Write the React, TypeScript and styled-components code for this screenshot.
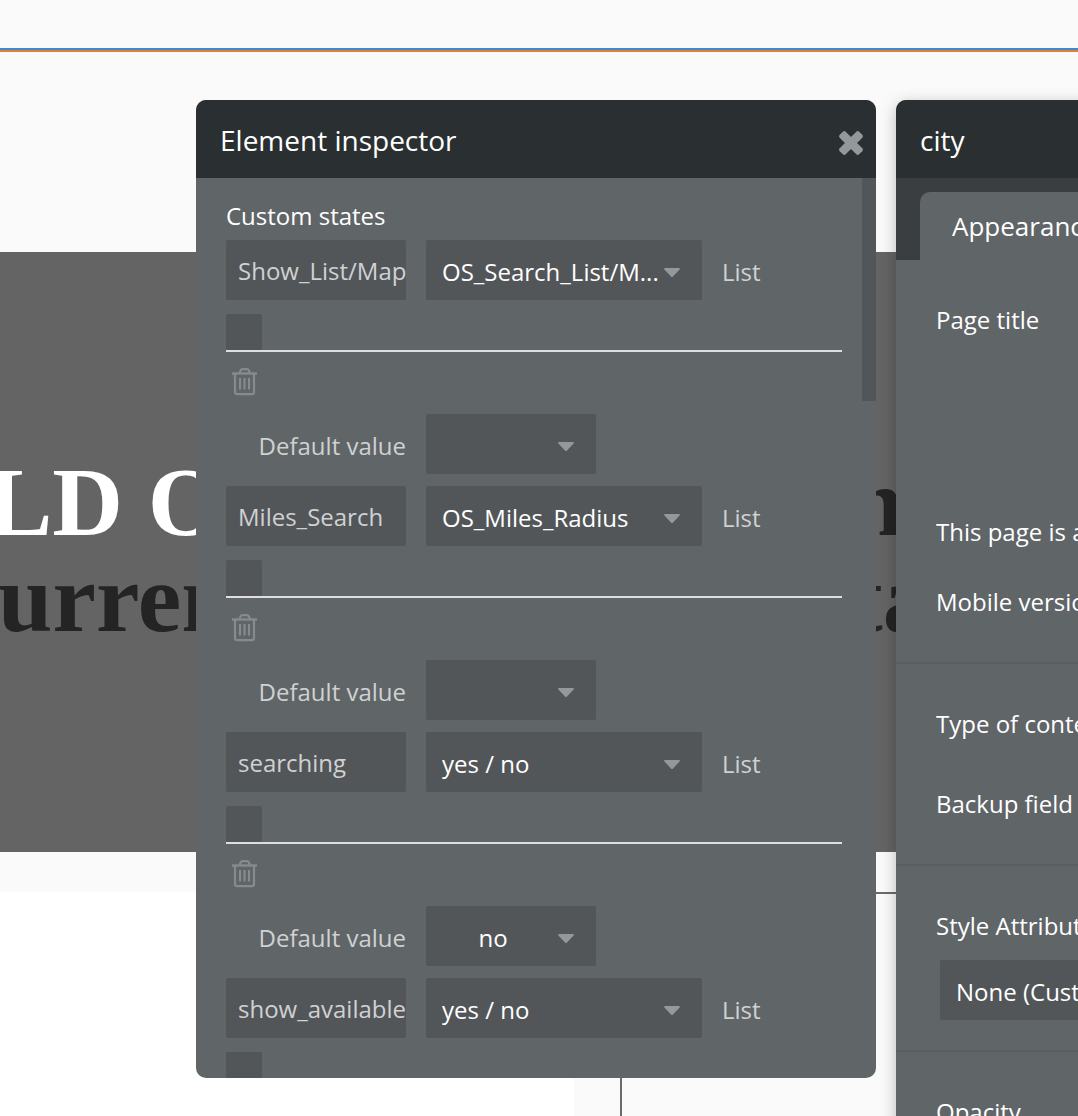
import React, { useId } from "react";
import styled, { createGlobalStyle } from "styled-components";

const color = {
  page: "#fafafa",
  band: "#646464",
  header: "#2a2f31",
  strip: "#3b3e41",
  panel: "#606568",
  field: "#535659",
  line: "#595d60",
  rule: "#dededc",
  text: "#ffffff",
  muted: "#cfd1d2",
  icon: "#93989b",
  iconDim: "#868b8e",
};

const GlobalStyle = createGlobalStyle`
  *, *::before, *::after { box-sizing: border-box; }
  body {
    margin: 0;
    background: ${color.page};
    font-family: "Open Sans", "Noto Sans", sans-serif;
  }
  input, select, button { font: inherit; }
`;

const Page = styled.main`
  position: relative;
  display: flex;
  flex-direction: column;
  height: 100vh;
  overflow: hidden;
`;

const TopBar = styled.div`
  flex: none;
  height: 52px;
  border-bottom: 2px solid #e0812f;
  &::after {
    content: "";
    display: block;
    height: 50px;
    border-bottom: 2px solid #3f87d9;
  }
`;

const Hero = styled.section`
  flex: none;
  display: flex;
  flex-direction: column;
  justify-content: center;
  height: 600px;
  margin: 200px 0 40px;
  padding-bottom: 4px;
  background: ${color.band};
`;

const HeroLine = styled.p<{ $start: number }>`
  display: flex;
  margin: 0 0 0 ${(p) => p.$start}px;
  color: #242424;
  font: bold 98px/96px "Liberation Serif", "Times New Roman", serif;
  white-space: nowrap;
`;

const HeroLead = styled.span<{ $light?: boolean; $width: number }>`
  flex: none;
  width: ${(p) => p.$width}px;
  color: ${(p) => (p.$light ? "#ffffff" : "inherit")};
`;

const Cards = styled.section`
  flex: 1;
  display: flex;
  gap: 46px;
`;

const WhiteCard = styled.div`
  width: 574px;
  background: #ffffff;
`;

const OutlineCard = styled.div`
  flex: 1;
  border: 2px solid #6b6b6b;
  border-width: 2px 0 0 2px;
`;

const Window = styled.section<{ $left: number; $height: number; $shadow?: boolean }>`
  position: absolute;
  top: 100px;
  left: ${(p) => p.$left}px;
  display: flex;
  flex-direction: column;
  width: 680px;
  height: ${(p) => p.$height}px;
  overflow: hidden;
  border-radius: 10px;
  background: ${color.panel};
  color: ${color.text};
  font-size: 24px;
  line-height: 32px;
  box-shadow: ${(p) => (p.$shadow ? "0 4px 16px rgba(0, 0, 0, 0.26)" : "none")};
`;

const WindowHeader = styled.header`
  flex: none;
  display: flex;
  align-items: center;
  justify-content: space-between;
  height: 78px;
  padding: 2px 12px 0 24px;
  background: ${color.header};
`;

const WindowTitle = styled.h2`
  margin: 0;
  font-size: 28px;
  font-weight: 400;
  line-height: 36px;
`;

const IconButton = styled.button`
  display: flex;
  padding: 0;
  border: 0;
  background: none;
  color: ${color.icon};
  cursor: pointer;
`;

const CloseButton = styled(IconButton)`
  padding-top: 6px;
`;

const InspectorBody = styled.div`
  flex: 1;
  display: flex;
  align-items: flex-start;
  min-height: 0;
  overflow: hidden;
`;

const StateList = styled.div`
  flex: 1;
  padding: 22px 20px 0 30px;
`;

const ScrollThumb = styled.div`
  flex: none;
  width: 14px;
  height: 223px;
  background: ${color.field};
`;

const SectionTitle = styled.h3`
  margin: 0 0 8px;
  font-size: 24px;
  font-weight: 400;
  line-height: 32px;
`;

const StateItem = styled.div`
  margin-bottom: 12px;
`;

const FieldRow = styled.div`
  display: flex;
  align-items: center;
  gap: 20px;
`;

const NameInput = styled.input`
  width: 180px;
  height: 60px;
  padding: 0 0 0 12px;
  border: 0;
  border-radius: 2px;
  background: ${color.field};
  color: ${color.muted};
`;

const SelectBox = styled.span<{ $width: number }>`
  position: relative;
  flex: none;
  width: ${(p) => p.$width}px;
`;

const Select = styled.select<{ $centered?: boolean }>`
  appearance: none;
  display: block;
  width: 100%;
  height: 60px;
  padding: ${(p) => (p.$centered ? "4px 52px 0 16px" : "4px 40px 0 16px")};
  border: 0;
  border-radius: 2px;
  background: ${color.field};
  color: ${color.text};
  text-align-last: ${(p) => (p.$centered ? "center" : "left")};
`;

const Caret = styled.svg`
  position: absolute;
  top: 28px;
  right: 22px;
  pointer-events: none;
`;

const MutedLabel = styled.label<{ $right?: boolean }>`
  width: ${(p) => (p.$right ? "180px" : "auto")};
  padding-top: 4px;
  color: ${color.muted};
  text-align: ${(p) => (p.$right ? "right" : "left")};
`;

const CheckRow = styled.div`
  display: flex;
  margin-top: 14px;
  border-bottom: 2px solid ${color.rule};
`;

const Check = styled.input`
  appearance: none;
  width: 36px;
  height: 36px;
  margin: 0;
  border-radius: 2px;
  background: ${color.field};
`;

const DeleteRow = styled.div`
  display: flex;
  align-items: center;
  height: 62px;
  padding: 0 0 2px 6px;
`;

const DeleteButton = styled(IconButton)`
  color: ${color.iconDim};
`;

const TabStrip = styled.nav`
  flex: none;
  display: flex;
  padding: 14px 24px 0;
  background: ${color.strip};
`;

const Tab = styled.button`
  height: 68px;
  padding: 0 32px;
  border: 0;
  border-radius: 10px 10px 0 0;
  background: ${color.panel};
  color: ${color.text};
  font-size: 26px;
  line-height: 32px;
`;

const Group = styled.div<{ $bottom?: number; $gap: number }>`
  flex: none;
  display: flex;
  flex-direction: column;
  gap: ${(p) => p.$gap}px;
  padding: 44px 40px ${(p) => p.$bottom ?? 44}px;
  border-bottom: 2px solid ${color.line};
`;

const PropertyLabel = styled.div<{ $tall?: boolean }>`
  height: ${(p) => (p.$tall ? "174px" : "32px")};
  white-space: nowrap;
`;

const StyleField = styled.div`
  display: flex;
  padding-left: 4px;
`;

function Dropdown(props: {
  label?: string;
  id?: string;
  value: string;
  width: number;
  centered?: boolean;
}) {
  return (
    <SelectBox $width={props.width}>
      <Select
        id={props.id}
        aria-label={props.label}
        defaultValue={props.value}
        $centered={props.centered}
      >
        <option value={props.value}>{props.value}</option>
      </Select>
      <Caret width="16" height="10" viewBox="0 0 16 10" aria-hidden="true">
        <path d="M1 0h14c1 0 1.200.8.600 1.400L9 8.500c-.6.700-1.400.700-2 0L.4 1.400C-.2.800 0 0 1 0z" fill={color.icon} />
      </Caret>
    </SelectBox>
  );
}

function TrashIcon() {
  return (
    <svg width="26" height="28" viewBox="0 0 26 28" fill="none" stroke="currentColor" aria-hidden="true">
      <path d="M0 5.500h25" strokeWidth="2.400" />
      <path d="M7.500 5 8.700 2.300Q9.200 1.100 10.500 1.100h4.500q1.300 0 1.800 1.200L18 5" strokeWidth="2.200" />
      <path d="M3 6v18Q3 26.200 5.300 26.200h14.400q2.300 0 2.300-2.200V6" strokeWidth="2.200" />
      <path d="M8 10v11.500M12.500 10v11.500M17 10v11.500" strokeWidth="2.100" />
    </svg>
  );
}

function CloseIcon() {
  return (
    <svg width="26" height="26" viewBox="-13 -13 26 26" fill="currentColor" aria-hidden="true">
      <rect x="-13.750" y="-4.250" width="27.500" height="8.500" rx="2" transform="rotate(45)" />
      <rect x="-13.750" y="-4.250" width="27.500" height="8.500" rx="2" transform="rotate(-45)" />
    </svg>
  );
}

interface CustomState {
  name: string;
  type: string;
  value: string;
}

const states: CustomState[] = [
  { name: "Show_List/Map", type: "OS_Search_List/M...", value: "" },
  { name: "Miles_Search", type: "OS_Miles_Radius", value: "" },
  { name: "searching", type: "yes / no", value: "no" },
  { name: "show_available", type: "yes / no", value: "" },
];

function StateEditor({ state }: { state: CustomState }) {
  const id = useId();
  return (
    <StateItem>
      <FieldRow>
        <NameInput aria-label="State name" defaultValue={state.name} />
        <Dropdown label="State type" value={state.type} width={276} />
        <MutedLabel htmlFor={id + "list"}>List</MutedLabel>
      </FieldRow>
      <CheckRow>
        <Check type="checkbox" id={id + "list"} />
      </CheckRow>
      <DeleteRow>
        <DeleteButton type="button" aria-label="Delete state">
          <TrashIcon />
        </DeleteButton>
      </DeleteRow>
      <FieldRow>
        <MutedLabel $right htmlFor={id + "default"}>
          Default value
        </MutedLabel>
        <Dropdown id={id + "default"} value={state.value} width={170} centered />
      </FieldRow>
    </StateItem>
  );
}

export default function App() {
  return (
    <>
      <GlobalStyle />
      <Page>
        <TopBar />
        <Hero>
          <HeroLine $start={-13}>
            <HeroLead $light $width={862}>LD O</HeroLead>
            <span>n</span>
          </HeroLine>
          <HeroLine $start={-2}>
            <HeroLead $width={852}>urren</HeroLead>
            <span>ta</span>
          </HeroLine>
        </Hero>
        <Cards>
          <WhiteCard />
          <OutlineCard />
        </Cards>

        <Window $left={896} $height={1200} $shadow>
          <WindowHeader>
            <WindowTitle>city</WindowTitle>
          </WindowHeader>
          <TabStrip>
            <Tab type="button">Appearance</Tab>
          </TabStrip>
          <Group $gap={38}>
            <PropertyLabel $tall>Page title</PropertyLabel>
            <PropertyLabel>This page is a</PropertyLabel>
            <PropertyLabel>Mobile version</PropertyLabel>
          </Group>
          <Group $gap={48}>
            <PropertyLabel>Type of content</PropertyLabel>
            <PropertyLabel>Backup field</PropertyLabel>
          </Group>
          <Group $bottom={30} $gap={18}>
            <PropertyLabel as="label" htmlFor="style">Style Attributes</PropertyLabel>
            <StyleField>
              <Dropdown id="style" value="None (Custom)" width={400} />
            </StyleField>
          </Group>
          <Group $gap={38}>
            <PropertyLabel>Opacity</PropertyLabel>
          </Group>
        </Window>

        <Window $left={196} $height={978}>
          <WindowHeader>
            <WindowTitle>Element inspector</WindowTitle>
            <CloseButton type="button" aria-label="Close">
              <CloseIcon />
            </CloseButton>
          </WindowHeader>
          <InspectorBody>
            <StateList>
              <SectionTitle>Custom states</SectionTitle>
              {states.map((state) => (
                <StateEditor key={state.name} state={state} />
              ))}
            </StateList>
            <ScrollThumb />
          </InspectorBody>
        </Window>
      </Page>
    </>
  );
}
